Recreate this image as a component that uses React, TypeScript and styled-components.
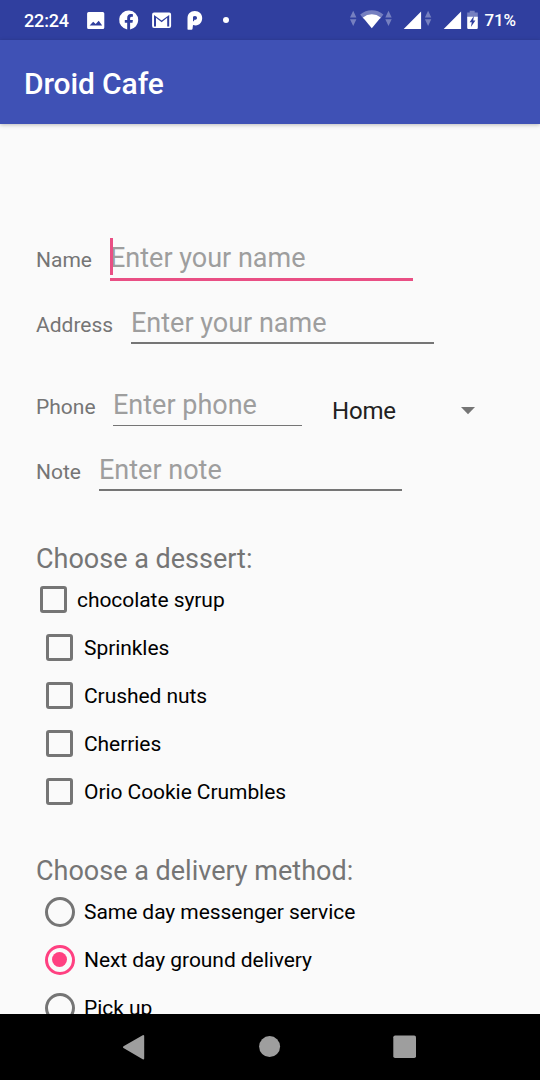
import React from "react";
import styled, { createGlobalStyle } from "styled-components";

const GlobalStyle = createGlobalStyle`
  *, *::before, *::after { box-sizing: border-box; }
  body { margin: 0; background: #000; font-family: Roboto, "Liberation Sans", sans-serif; }
`;

const Screen = styled.div`
  display: flex;
  flex-direction: column;
  width: 540px;
  height: 1080px;
  overflow: hidden;
  background: #fafafa;
`;

const StatusBar = styled.div`
  display: flex;
  align-items: center;
  flex: none;
  height: 40px;
  padding: 0 24px;
  background: #303f9f;
  color: #fff;
`;

const Clock = styled.span`
  width: 62px;
  font-size: 18px;
  font-weight: 500;
  line-height: 40px;
  letter-spacing: -0.15px;
  padding-top: 1px;
`;

const System = styled.div`
  display: flex;
  align-items: center;
  width: 168px;
  margin-left: auto;
`;

const StatusIcons = styled.svg`
  display: block;
  flex: none;
`;

const Battery = styled.span`
  margin-left: auto;
  font-size: 17px;
  font-weight: 500;
  line-height: 40px;
  letter-spacing: -0.15px;
  white-space: nowrap;
`;

const AppBar = styled.header`
  z-index: 1;
  display: flex;
  align-items: center;
  flex: none;
  height: 84px;
  padding: 4px 24px 0;
  background: #3f51b5;
  box-shadow: 0 1px 4px rgba(0, 0, 0, 0.25);
`;

const Title = styled.h1`
  margin: 0;
  color: #fff;
  font-size: 30px;
  font-weight: 500;
  line-height: 36px;
  letter-spacing: -0.12px;
  white-space: nowrap;
`;

const Content = styled.main`
  flex: 1;
  min-height: 0;
  overflow: hidden;
  padding: 118px 36px 0;
`;

const FieldRow = styled.div<{ $height: number; $after: number }>`
  display: flex;
  align-items: baseline;
  height: ${(p) => p.$height}px;
  margin-bottom: ${(p) => p.$after}px;
`;

const Label = styled.label<{ $width: number }>`
  flex: none;
  width: ${(p) => p.$width}px;
  color: #757575;
  font-size: 21px;
  line-height: 24px;
  white-space: nowrap;
`;

const Field = styled.div<{ $width: number; $line: number; $focused?: boolean; $pad: number }>`
  position: relative;
  flex: none;
  width: ${(p) => p.$width}px;
  padding-bottom: ${(p) => p.$pad}px;
  border-bottom: ${(p) => p.$line}px solid ${(p) => (p.$focused ? "#e94f84" : "#757575")};
`;

const Hint = styled.span`
  display: block;
  color: #9e9e9e;
  font-size: 27px;
  line-height: 32px;
  white-space: nowrap;
`;

const Caret = styled.span`
  position: absolute;
  left: 0;
  top: -4px;
  width: 3px;
  height: 37px;
  background: #e94f84;
`;

const Spinner = styled.div`
  display: flex;
  align-items: center;
  justify-content: space-between;
  align-self: flex-start;
  width: 143px;
  height: 28px;
  margin: 8px 0 0 30px;
  color: #212121;
  font-size: 24px;
  line-height: 28px;
  letter-spacing: -0.2px;
`;

const Heading = styled.h2<{ $before: number }>`
  margin: ${(p) => p.$before}px 0 1px;
  color: #757575;
  font-size: 27px;
  font-weight: 400;
  line-height: 32px;
  white-space: nowrap;
`;

const Option = styled.div<{ $indent: number; $gap: number }>`
  display: flex;
  align-items: center;
  gap: ${(p) => p.$gap}px;
  height: 48px;
  padding-left: ${(p) => p.$indent}px;
  color: #000;
  font-size: 21px;
  line-height: 24px;
  letter-spacing: -0.06px;
  white-space: nowrap;
`;

const CheckBox = styled.span`
  flex: none;
  width: 27px;
  height: 27px;
  margin-bottom: 1px;
  border: 3px solid #757575;
  border-radius: 3px;
`;

const Radio = styled.span<{ $checked: boolean }>`
  display: flex;
  align-items: center;
  justify-content: center;
  flex: none;
  width: 30px;
  height: 30px;
  border: 3px solid ${(p) => (p.$checked ? "#ff4081" : "#757575")};
  border-radius: 50%;

  &::after {
    content: "";
    width: 15px;
    height: 15px;
    margin: 0 1px 1px 0;
    border-radius: 50%;
    background: ${(p) => (p.$checked ? "#ff4081" : "transparent")};
  }
`;

const NavBar = styled.nav`
  flex: none;
  height: 66px;
  background: #000;
`;

const toppings = ["chocolate syrup", "Sprinkles", "Crushed nuts", "Cherries", "Orio Cookie Crumbles"];
const deliveries = ["Same day messenger service", "Next day ground delivery", "Pick up"];

function NotificationIcons() {
  return (
    <StatusIcons width="146" height="40" viewBox="86 0 146 40" fill="#fff">
      <path
        fillRule="evenodd"
        d="M88.600 12h14.200a1.500 1.500 0 0 1 1.500 1.500v14a1.500 1.500 0 0 1-1.500 1.500H88.600a1.500 1.500 0 0 1-1.500-1.500v-14a1.500 1.500 0 0 1 1.500-1.500zM89.600 25.600h12.600l-3.500-4.800-3 3.200-2.500-2.200z"
      />
      <path d="M138.200 20a9.500 9.500 0 1 0-11 9.400v-6.700h-2.400V20h2.400v-2.100c0-2.500 1.400-3.800 3.600-3.800 1 0 2.100.2 2.100.2v2.400h-1.200c-1.200 0-1.600.8-1.600 1.500V20h2.800l-.4 2.700h-2.400v6.700a9.500 9.500 0 0 0 8.100-9.400z" />
      <path
        fillRule="evenodd"
        d="M154 12.600h15.200a1.900 1.900 0 0 1 1.900 1.900v11.600a1.900 1.900 0 0 1-1.900 1.900H154a1.900 1.900 0 0 1-1.900-1.900V14.500a1.900 1.900 0 0 1 1.900-1.900zM154 15.100v11.300h2v-8.700l5.600 4.500 5.600-4.500v8.700h2V15.100l-7.600 5.300z"
      />
      <path
        fillRule="evenodd"
        d="M187.500 29.500V18.500c0-4.700 2.900-7.500 7.300-7.500s7.400 2.900 7.400 7-2.800 7.400-6.500 7.400c-1 0-1.900-.1-2.700-.4l-.5 4c-.1.500-.5.700-1 .7h-3.200c-.5 0-.8-.2-.8-.2zM193 16.700v4.100c0 .7.800.7 1 .1l.4-1.100h.6c1.200 0 2-.8 2-1.900s-.8-1.900-2-1.900c-.9 0-1.600.2-2 .7z"
      />
      <circle cx="226" cy="20" r="3" />
    </StatusIcons>
  );
}

function SystemIcons() {
  return (
    <StatusIcons width="132" height="40" viewBox="348 0 132 40" fill="#fff">
      <g fill="#7680c0">
        <path d="M350 17.500l3.200-6.700 3.200 6.700zM350 19.300h6.400l-3.200 6.700z" />
        <path d="M385.300 17.500l3.200-6.700 3.200 6.700zM385.300 19.300h6.400l-3.200 6.700z" />
        <path d="M424.900 17.500l3.200-6.700 3.200 6.700zM424.900 19.300h6.400l-3.200 6.700z" />
        <path d="M360.200 14.400a18 18 0 0 1 23.200 0L380 19h-16.400z" />
        <path d="M467.200 12.500h2.500V10.700h5v1.800h3.100v5h-10.600z" />
      </g>
      <path d="M371.800 28.200l-8.900-10.800a14.500 14.500 0 0 1 17.800 0z" />
      <path d="M403.700 29l17.400-17.500V29zM443.700 29l17.400-17.500V29z" />
      <path d="M467.200 16.700h10.600v11.100a1.200 1.200 0 0 1-1.200 1.200h-8.200a1.200 1.200 0 0 1-1.200-1.200z" />
      <path d="M473.900 16l-4.300 6.300h2.200l-.9 4.800 4.500-6.500h-2.200z" fill="#303f9f" />
    </StatusIcons>
  );
}

export default function App() {
  return (
    <>
      <GlobalStyle />
      <Screen>
        <StatusBar>
          <Clock>22:24</Clock>
          <NotificationIcons />
          <System>
            <SystemIcons />
            <Battery>71%</Battery>
          </System>
        </StatusBar>
        <AppBar>
          <Title>Droid Cafe</Title>
        </AppBar>
        <Content>
          <FieldRow $height={39} $after={26}>
            <Label $width={74}>Name</Label>
            <Field $width={303} $line={3} $pad={4} $focused>
              <Hint>Enter your name</Hint>
              <Caret />
            </Field>
          </FieldRow>
          <FieldRow $height={37} $after={45}>
            <Label $width={95}>Address</Label>
            <Field $width={303} $line={2} $pad={3}>
              <Hint>Enter your name</Hint>
            </Field>
          </FieldRow>
          <FieldRow $height={37} $after={28}>
            <Label $width={77}>Phone</Label>
            <Field $width={189} $line={1} $pad={4}>
              <Hint>Enter phone</Hint>
            </Field>
            <Spinner>
              Home
              <svg width="14" height="8" viewBox="0 0 14 8">
                <path d="M0 0h14L7 7.300z" fill="#757575" />
              </svg>
            </Spinner>
          </FieldRow>
          <FieldRow $height={37} $after={0}>
            <Label $width={63}>Note</Label>
            <Field $width={303} $line={2} $pad={3}>
              <Hint>Enter note</Hint>
            </Field>
          </FieldRow>

          <Heading $before={52}>Choose a dessert:</Heading>
          {toppings.map((name, i) => (
            <Option key={name} $indent={i === 0 ? 4 : 10} $gap={i === 0 ? 10 : 11}>
              <CheckBox />
              {name}
            </Option>
          ))}

          <Heading $before={39}>Choose a delivery method:</Heading>
          {deliveries.map((name, i) => (
            <Option key={name} $indent={9} $gap={9}>
              <Radio $checked={i === 1} />
              {name}
            </Option>
          ))}
        </Content>
        <NavBar>
          <svg width="540" height="66" viewBox="0 0 540 66" fill="#9e9e9e" stroke="#9e9e9e" strokeLinejoin="round">
            <path d="M143.200 22v22.500L124 33.200z" strokeWidth="2" />
            <circle cx="269.600" cy="32.600" r="10.500" stroke="none" />
            <rect x="393.300" y="21.500" width="22.700" height="22.500" rx="1.800" stroke="none" />
          </svg>
        </NavBar>
      </Screen>
    </>
  );
}
